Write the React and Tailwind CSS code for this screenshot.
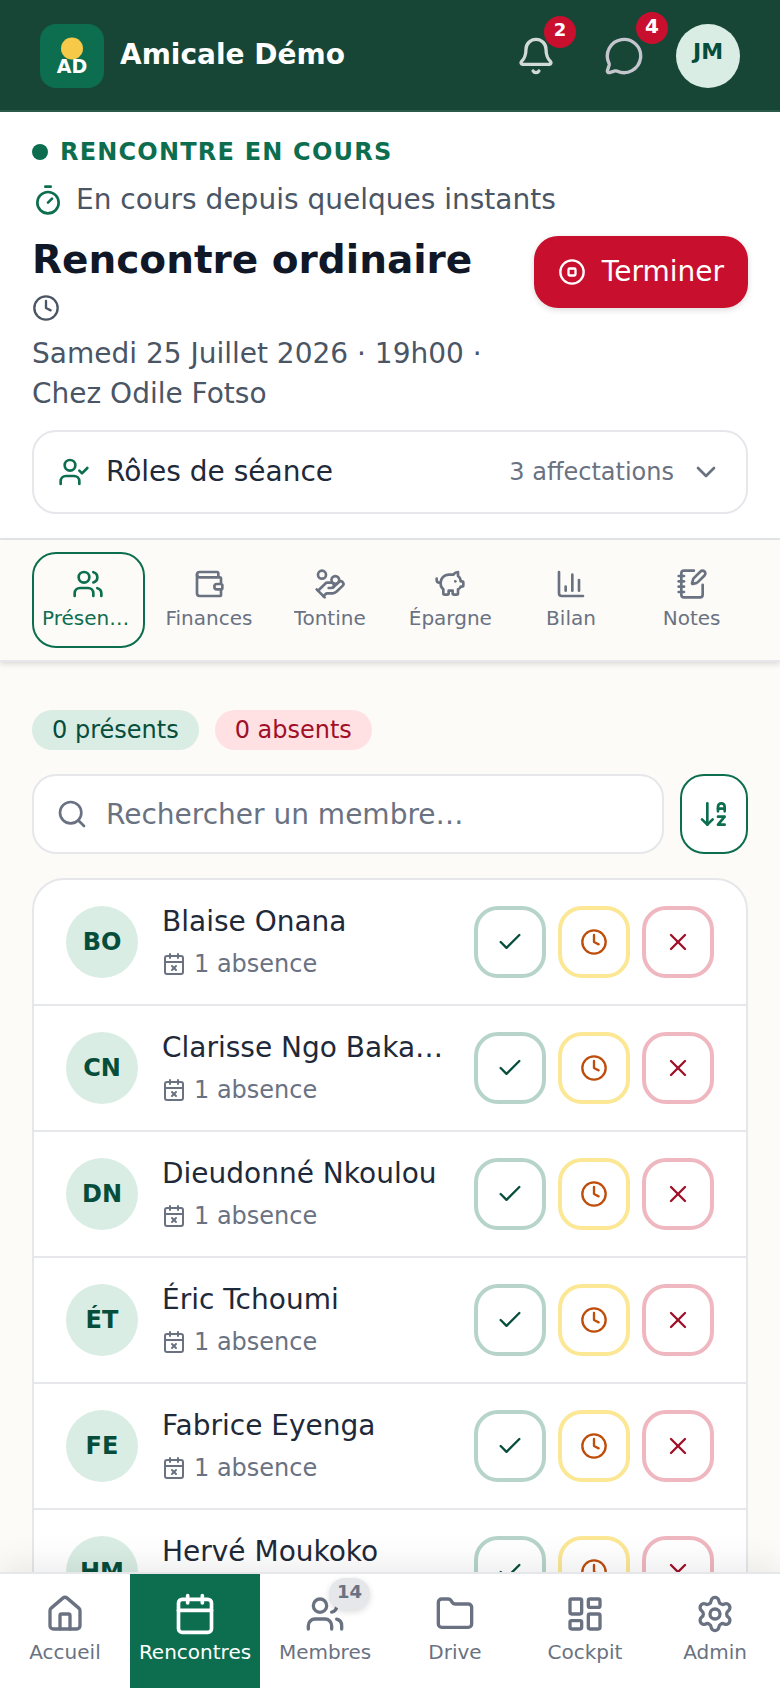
import React, { useState } from 'react';
import {
  ArrowDownAZ,
  Bell,
  Calendar,
  CalendarX,
  ChartColumn,
  Check,
  ChevronDown,
  CircleStop,
  Clock,
  Folder,
  HandCoins,
  House,
  LayoutDashboard,
  MessageCircle,
  NotebookPen,
  PiggyBank,
  Search,
  Settings,
  Timer,
  UserCheck,
  Users,
  Wallet,
  X,
} from 'lucide-react';

const TABS = [
  { id: 'presences', label: 'Présences', icon: Users },
  { id: 'finances', label: 'Finances', icon: Wallet },
  { id: 'tontine', label: 'Tontine', icon: HandCoins },
  { id: 'epargne', label: 'Épargne', icon: PiggyBank },
  { id: 'bilan', label: 'Bilan', icon: ChartColumn },
  { id: 'notes', label: 'Notes', icon: NotebookPen },
];

const MEMBERS = [
  { initials: 'BO', name: 'Blaise Onana' },
  { initials: 'CN', name: 'Clarisse Ngo Bakang' },
  { initials: 'DN', name: 'Dieudonné Nkoulou' },
  { initials: 'ÉT', name: 'Éric Tchoumi' },
  { initials: 'FE', name: 'Fabrice Eyenga' },
  { initials: 'HM', name: 'Hervé Moukoko' },
];

const NAV = [
  { label: 'Accueil', icon: House },
  { label: 'Rencontres', icon: Calendar, active: true },
  { label: 'Membres', icon: Users, badge: 14 },
  { label: 'Drive', icon: Folder },
  { label: 'Cockpit', icon: LayoutDashboard },
  { label: 'Admin', icon: Settings },
];

function Logo() {
  return (
    <div className="flex h-16 w-16 shrink-0 items-center justify-center rounded-2xl bg-[#0c6e4f]">
      <svg viewBox="0 0 64 64" className="h-16 w-16" aria-hidden="true">
        <circle cx="32" cy="24.5" r="11" fill="#f7c948" />
        <text x="32" y="49" textAnchor="middle" fontSize="19" fontWeight="700" fill="#ffffff">
          AD
        </text>
      </svg>
    </div>
  );
}

function Header() {
  return (
    <header className="flex items-center justify-between border-b-2 border-[#2a5a48] bg-[#174637] px-10 pt-3 pb-2.5">
      <a href="#accueil" className="flex items-center gap-4">
        <Logo />
        <span className="pb-0.5 text-[28px] leading-9 font-bold text-white">Amicale Démo</span>
      </a>
      <div className="flex items-center">
        <button type="button" aria-label="Notifications" className="relative flex h-22 w-22 items-center justify-center text-white/80">
          <Bell className="h-10 w-10" />
          <span className="absolute top-1 right-1 flex h-8 w-8 justify-center rounded-full bg-[#c8102e] text-lg leading-7 font-bold text-white">2</span>
        </button>
        <button type="button" aria-label="Messages" className="relative flex h-22 w-22 items-center justify-center text-[#c5c6cd]">
          <MessageCircle className="h-10 w-10" />
          <span className="absolute top-0 right-0 flex h-8 w-8 justify-center rounded-full bg-[#c8102e] text-xl leading-7 font-bold text-white">4</span>
        </button>
        <button type="button" aria-label="Profil" className="ml-2 flex h-16 w-16 justify-center rounded-full bg-[#d9ede4] text-[22px] leading-14 font-bold text-[#064e3b]">
          JM
        </button>
      </div>
    </header>
  );
}

function MeetingSummary() {
  return (
    <section className="border-b-2 border-gray-200 bg-white px-8 py-6">
      <p className="flex items-center gap-3 text-2xl leading-8 font-bold tracking-wider text-[#0c6e4f] uppercase">
        <span className="h-4 w-4 rounded-full bg-[#0c6e4f]" />
        Rencontre en cours
      </p>
      <p className="mt-3 flex items-center gap-3 text-[28px] leading-10 text-gray-600">
        <Timer className="h-8 w-8 text-[#0c6e4f]" />
        En cours depuis quelques instants
      </p>
      <div className="mt-4 flex items-start gap-6">
        <div className="min-w-0 flex-1">
          <h1 className="text-[39px] leading-12 font-bold text-gray-900">Rencontre ordinaire</h1>
          <Clock className="mt-2.5 h-7 w-7 text-gray-600" />
          <p className="mt-3 text-[28px] leading-10 text-gray-600">
            Samedi 25 Juillet 2026 · 19h00 · Chez Odile Fotso
          </p>
        </div>
        <button type="button" className="flex h-18 items-center gap-4 rounded-3xl bg-[#c8102e] px-6 text-[28px] leading-10 text-white shadow-[0_2px_6px_rgba(0,0,0,0.14)]">
          <CircleStop className="h-7 w-7" />
          Terminer
        </button>
      </div>
      <button type="button" className="mt-4 flex w-full items-center gap-4 rounded-3xl border-2 border-gray-200 px-6 py-5 text-left">
        <UserCheck className="h-8 w-8 text-[#0c6e4f]" />
        <span className="flex-1 text-[28px] leading-10 text-gray-800">Rôles de séance</span>
        <span className="text-2xl text-gray-500">3 affectations</span>
        <ChevronDown className="h-8 w-8 text-gray-500" />
      </button>
    </section>
  );
}

function Tabs({ current, onChange }) {
  return (
    <nav className="relative z-10 grid grid-cols-6 gap-2 border-b-2 border-gray-200 bg-[#fdfbf7] px-8 py-3 shadow-[0_2px_6px_rgba(0,0,0,0.14)]">
      {TABS.map(({ id, label, icon: Icon }) => (
        <button
          key={id}
          type="button"
          onClick={() => onChange(id)}
          className={`flex min-w-0 flex-col items-center gap-1 rounded-3xl border-2 px-2 py-3.5 ${
            current === id ? 'border-[#0c6e4f] text-[#0c6e4f]' : 'border-transparent text-gray-500'
          }`}
        >
          <Icon className="h-8 w-8" />
          <span className="max-w-full truncate text-xl leading-7">{label}</span>
        </button>
      ))}
    </nav>
  );
}

function MemberRow({ initials, name }) {
  return (
    <li className="flex items-center gap-6 px-8 py-6">
      <div className="flex h-18 w-18 shrink-0 items-center justify-center rounded-full bg-[#d9ede4] text-2xl font-bold text-[#064e3b]">
        {initials}
      </div>
      <div className="min-w-0 flex-1">
        <p className="truncate text-[28px] leading-9 text-gray-800">{name}</p>
        <p className="mt-2 flex items-center gap-2 text-2xl leading-8 text-gray-500">
          <CalendarX className="h-6 w-6" />
          1 absence
        </p>
      </div>
      <div className="flex shrink-0 gap-3">
        <button type="button" aria-label={`${name} : présent`} className="flex h-18 w-18 items-center justify-center rounded-3xl border-4 border-[#b6d4ca] text-[#064e3b]">
          <Check className="h-7 w-7" />
        </button>
        <button type="button" aria-label={`${name} : en retard`} className="flex h-18 w-18 items-center justify-center rounded-3xl border-4 border-[#fbe794] text-[#bf4d0b]">
          <Clock className="h-7 w-7" />
        </button>
        <button type="button" aria-label={`${name} : absent`} className="flex h-18 w-18 items-center justify-center rounded-3xl border-4 border-[#efb7c0] text-[#9f1028]">
          <X className="h-7 w-7" />
        </button>
      </div>
    </li>
  );
}

function BottomNav() {
  return (
    <nav className="relative z-20 grid grid-cols-6 border-t-2 border-gray-200 bg-white shadow-[0_-8px_32px_rgba(0,0,0,0.08)]">
      {NAV.map(({ label, icon: Icon, active, badge }) => (
        <a
          key={label}
          href={`#${label.toLowerCase()}`}
          className={`flex flex-col items-center gap-1 pt-5 pb-[22px] ${active ? 'bg-[#0c6e4f] text-white' : 'text-gray-500'}`}
        >
          <span className="relative">
            <Icon className={`h-10 w-10 ${active ? 'scale-110' : ''}`} />
            {badge && (
              <span className="absolute -top-4 left-6 flex h-8 justify-center rounded-full bg-gray-200 px-2 text-lg leading-7 font-bold text-gray-500 shadow-[0_2px_6px_rgba(0,0,0,0.14)]">
                {badge}
              </span>
            )}
          </span>
          <span className="text-xl leading-7">{label}</span>
        </a>
      ))}
    </nav>
  );
}

export default function App() {
  const [tab, setTab] = useState('presences');
  const [query, setQuery] = useState('');

  const members = MEMBERS.filter((m) => m.name.toLowerCase().includes(query.toLowerCase()));

  return (
    <div className="flex h-screen flex-col overflow-hidden bg-[#fdfbf7] font-['DejaVu_Sans',sans-serif]">
      <Header />
      <main className="min-h-0 flex-1 overflow-y-auto [scrollbar-width:none]">
        <MeetingSummary />
        <Tabs current={tab} onChange={setTab} />

        <section className="space-y-6 px-8 py-12">
          {/* Attendance counters */}
          <div className="flex gap-4 text-2xl leading-8">
            <span className="rounded-full bg-[#d9ede4] px-5 py-1 text-[#064e3b]">0 présents</span>
            <span className="rounded-full bg-[#ffe1e4] px-5 py-1 text-[#9f1028]">0 absents</span>
          </div>

          {/* Search and sort */}
          <div className="flex gap-4">
            <div className="relative flex-1">
              <Search className="absolute top-6 left-6 h-8 w-8 text-gray-500" />
              <input
                type="text"
                aria-label="Rechercher un membre"
                placeholder="Rechercher un membre…"
                value={query}
                onChange={(e) => setQuery(e.target.value)}
                className="h-20 w-full rounded-3xl border-2 border-gray-200 bg-white pr-6 pl-18 text-[28px] text-gray-800 placeholder:text-gray-500"
              />
            </div>
            <button type="button" aria-label="Trier" className="flex h-20 items-center rounded-3xl border-2 border-[#0c6e4f] bg-white px-4 text-[#0c6e4f]">
              <ArrowDownAZ className="h-8 w-8" />
            </button>
          </div>

          <ul className="divide-y-2 divide-gray-200 rounded-[32px] border-2 border-gray-200 bg-white">
            {members.map((m) => (
              <MemberRow key={m.initials} {...m} />
            ))}
          </ul>
        </section>
      </main>
      <BottomNav />
    </div>
  );
}
